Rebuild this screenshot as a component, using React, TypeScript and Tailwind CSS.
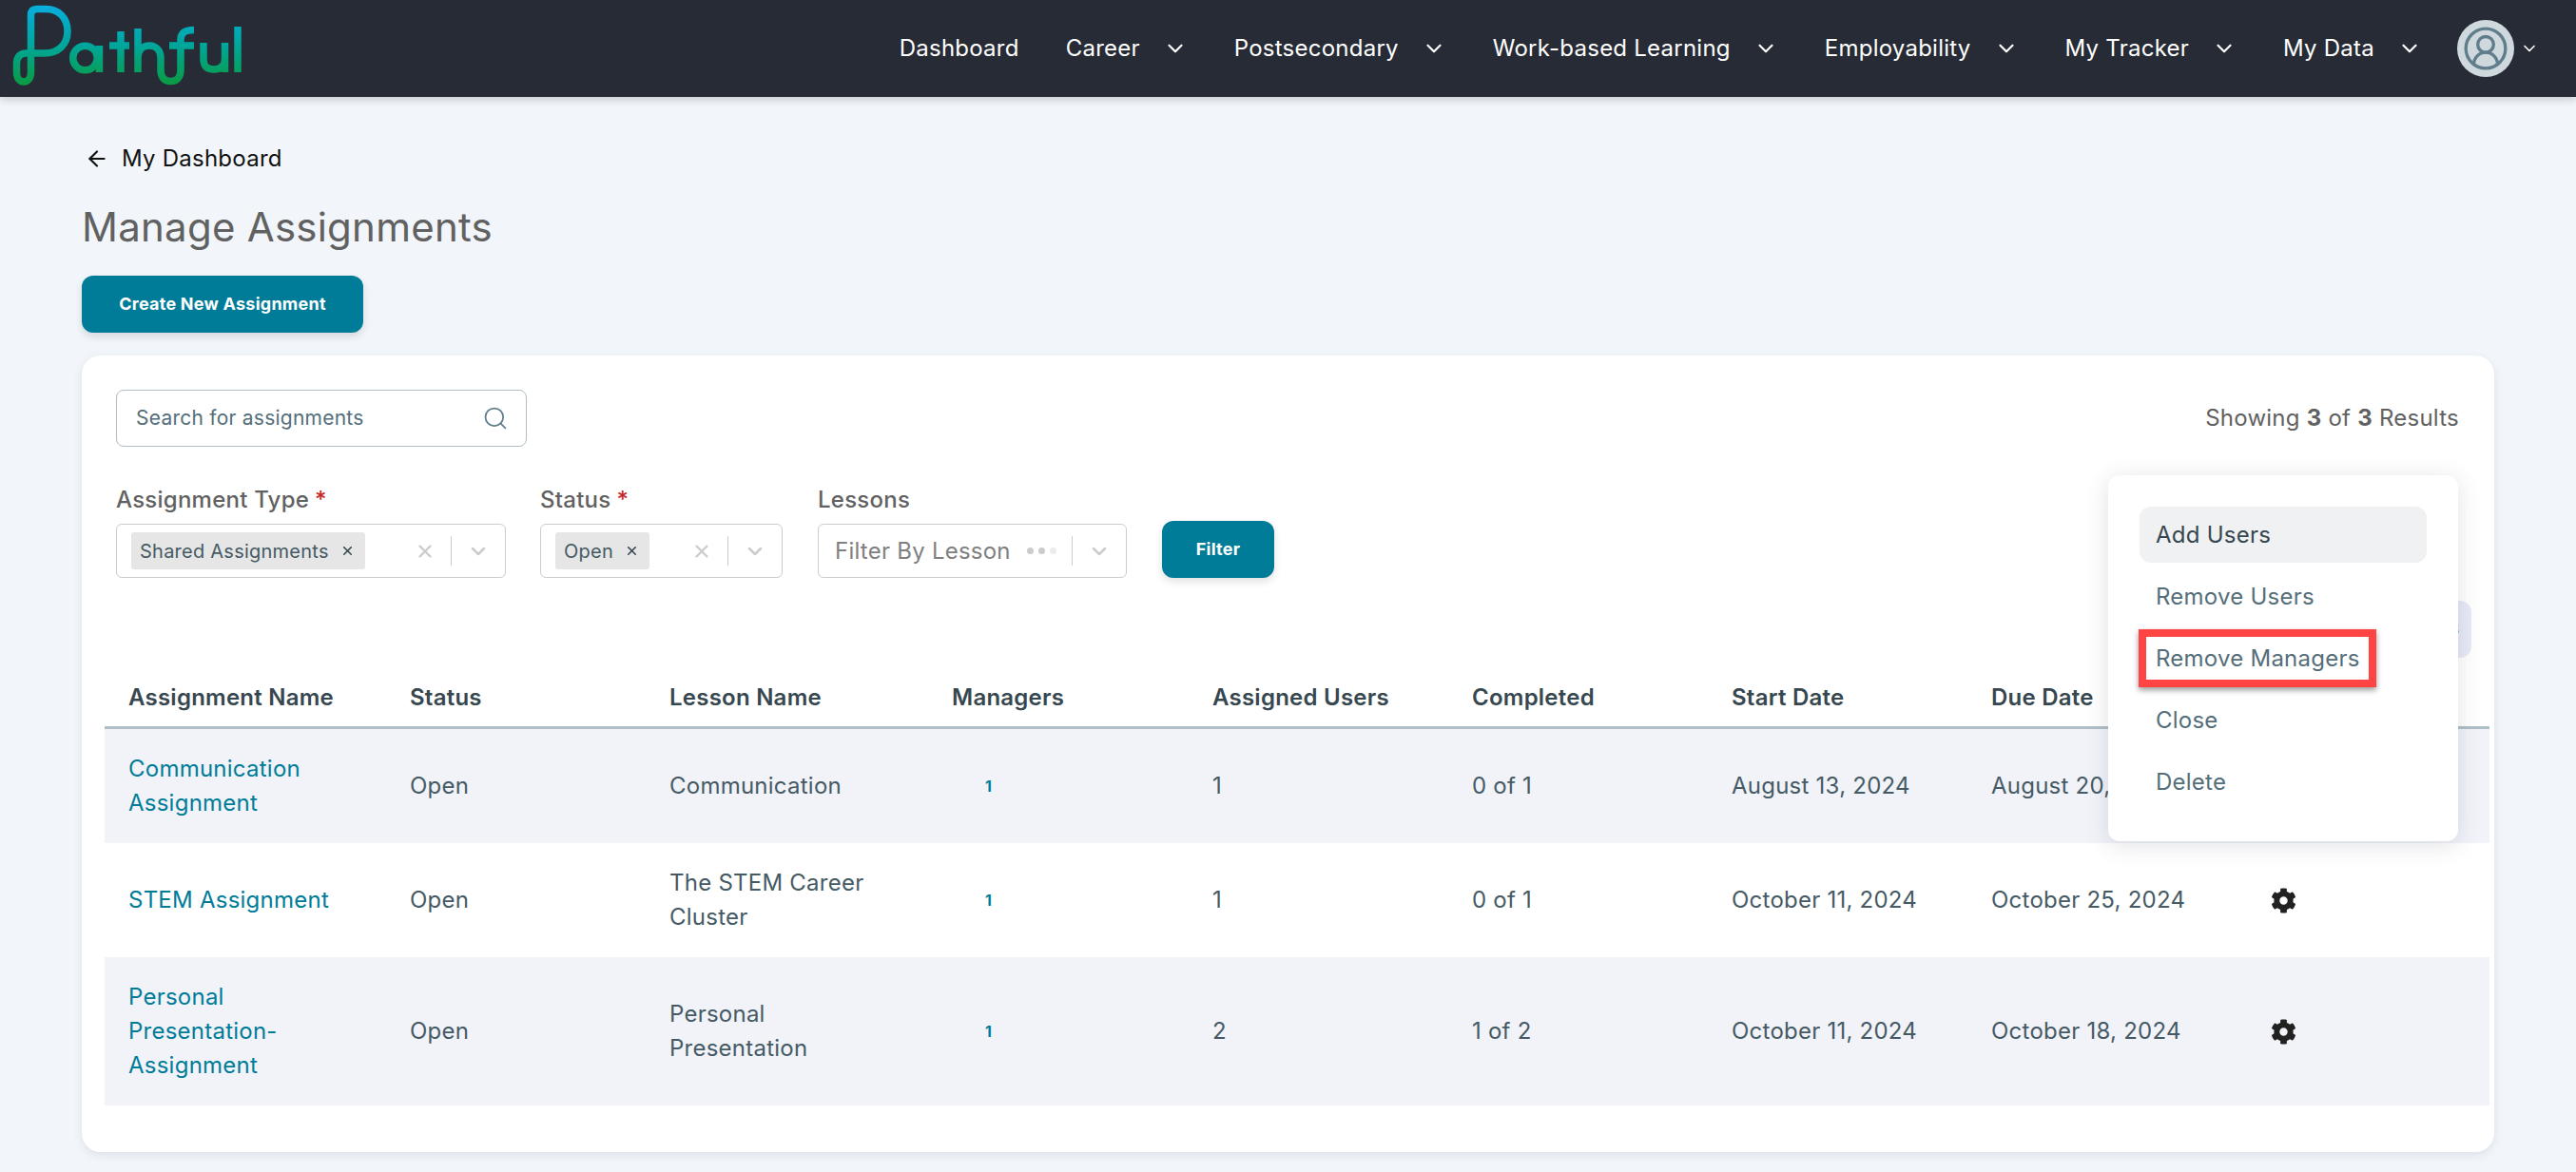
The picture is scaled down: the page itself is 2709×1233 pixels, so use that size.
import { ArrowLeft, ChevronDown, Search, UserCircle2, X } from "lucide-react";
import { FaCog } from "react-icons/fa";

const navItems = [
  { label: "Dashboard", menu: false },
  { label: "Career", menu: true },
  { label: "Postsecondary", menu: true },
  { label: "Work-based Learning", menu: true },
  { label: "Employability", menu: true },
  { label: "My Tracker", menu: true },
  { label: "My Data", menu: true },
];

const rows = [
  { name: "Communication Assignment", lesson: "Communication", assigned: "1", completed: "0 of 1", start: "August 13, 2024", due: "August 20, 2024", shaded: true },
  { name: "STEM Assignment", lesson: "The STEM Career Cluster", assigned: "1", completed: "0 of 1", start: "October 11, 2024", due: "October 25, 2024", shaded: false },
  { name: "Personal Presentation-Assignment", lesson: "Personal Presentation", assigned: "2", completed: "1 of 2", start: "October 11, 2024", due: "October 18, 2024", shaded: true },
];

const columns = [
  { label: "Assignment Name", width: "w-[296px]" },
  { label: "Status", width: "w-[273px]" },
  { label: "Lesson Name", width: "w-[297px]" },
  { label: "Managers", width: "w-[274px]" },
  { label: "Assigned Users", width: "w-[273px]" },
  { label: "Completed", width: "w-[273px]" },
  { label: "Start Date", width: "w-[273px]" },
  { label: "Due Date", width: "w-[273px]" },
  { label: "", width: "w-[276px]" },
];

function Logo() {
  return (
    <svg width="270" height="102" viewBox="0 0 270 102" fill="none" role="img" aria-label="Pathful">
      <defs>
        <linearGradient id="pathful" gradientUnits="userSpaceOnUse" x1="0" y1="6" x2="0" y2="90">
          <stop offset="0" stopColor="#08aede" />
          <stop offset="0.5" stopColor="#00a69a" />
          <stop offset="1" stopColor="#0a9a40" />
        </linearGradient>
      </defs>
      <g stroke="url(#pathful)" strokeWidth="7.5">
        <path d="M32.5 74V16Q32.5 9.5 39 9.5H48C62 9.5 71 19 71 33C71 47 61 56 47 56H28C21 56 17.5 60 17.5 67V76C17.5 82 20.5 86 25 86C29.5 86 32.5 82 32.5 76V70" />
        <circle cx="89.5" cy="61" r="12.8" />
        <path d="M104.5 48V76" />
        <path d="M127 33V76M115 48H136" />
        <path d="M145 30V76M145 61C145 53 150 48 157 48C164 48 169 53 169 61V74C169 81 173 85.5 179.5 85.5C186 85.5 190 81 190 74V42C190 35 194 31.5 204 31.5M178 48H204" />
        <path d="M214 45V62C214 70 218 73 225 73C232 73 236.500 70 236.500 62V45V76" />
        <path d="M250 28V76" />
      </g>
    </svg>
  );
}

function NavBar() {
  return (
    <header className="flex h-[102px] items-center justify-between bg-[#272b35] shadow-[0_3px_8px_rgba(0,0,0,0.18)]">
      <Logo />
      <nav className="flex items-center pr-[39px] text-white">
        {navItems.map((item) => (
          <div key={item.label} className="mr-[49px] flex items-center">
            <span>{item.label}</span>
            {item.menu && <ChevronDown className="ml-[24px] h-[26px] w-[26px]" strokeWidth={2} />}
          </div>
        ))}
        <div className="-ml-[12px] flex h-[60px] w-[60px] items-center justify-center rounded-full bg-[#cfd8dc] text-[#607d8b]">
          <UserCircle2 className="h-[50px] w-[50px]" strokeWidth={1.6} />
        </div>
        <ChevronDown className="ml-[6px] h-[20px] w-[20px]" strokeWidth={2} />
      </nav>
    </header>
  );
}

function SelectBox({ width, tag, placeholder }: { width: string; tag?: string; placeholder?: string }) {
  return (
    <div className={`flex h-[57px] items-center rounded-[6px] border border-[#cccccc] bg-white pl-[15px] ${width}`}>
      {tag && (
        <div className="flex h-[39px] items-center rounded-[3px] bg-[#e6e6e6] pl-[9px] pr-[11px] text-[20px] text-[#455a64]">
          <span>{tag}</span>
          <X className="ml-[12px] h-[15px] w-[15px] text-[#37474f]" strokeWidth={2.5} />
        </div>
      )}
      {placeholder && (
        <span className="-ml-[-2px] whitespace-nowrap text-[#808080]">{placeholder}</span>
      )}
      <div className="ml-auto flex items-center">
        {tag ? (
          <X className="h-[22px] w-[22px] text-[#cccccc]" strokeWidth={2.5} />
        ) : (
          <div className="flex gap-[5px]">
            <span className="h-[7px] w-[7px] rounded-full bg-[#cccccc]" />
            <span className="h-[7px] w-[7px] rounded-full bg-[#cccccc]" />
            <span className="h-[7px] w-[7px] rounded-full bg-[#ebebeb]" />
          </div>
        )}
        <div className="ml-[16px] h-[31px] w-px bg-[#cccccc]" />
        <ChevronDown className="mx-[16px] h-[24px] w-[24px] text-[#cccccc]" strokeWidth={2.5} />
      </div>
    </div>
  );
}

function Field({ label, required, children }: { label: string; required?: boolean; children: React.ReactNode }) {
  return (
    <div className="flex flex-col gap-[7px]">
      <label className="h-[36px] font-medium text-[#616161]">
        {label}
        {required && <span className="ml-[6px] text-[#c62828]">*</span>}
      </label>
      {children}
    </div>
  );
}

function ActionMenu() {
  const items = ["Remove Users", "Remove Managers", "Close", "Delete"];
  return (
    <div className="absolute left-[2131px] top-[126px] flex w-[368px] flex-col gap-[6px] rounded-[12px] bg-white p-[33px] shadow-[0_4px_24px_rgba(60,70,90,0.16)]">
      <div className="flex h-[59px] items-center rounded-[12px] bg-[#f0f1f3] px-[17px] text-[#37474f]">Add Users</div>
      {items.map((item) => (
        <div key={item} className="relative flex h-[59px] items-center px-[17px] text-[#546e7a]">
          {item}
          {item === "Remove Managers" && (
            <div className="absolute -top-px left-[-1px] h-[61px] w-[250px] border-[8px] border-[#ff4444] shadow-[0_3px_6px_rgba(0,0,0,0.4)]" />
          )}
        </div>
      ))}
    </div>
  );
}

export default function App() {
  return (
    <div className="h-[1233px] overflow-hidden bg-[#f2f6fb] font-[Inter,sans-serif] text-[24px] leading-[36px] tracking-[0.01em]">
      <NavBar />
      <main className="px-[86px]">
        <a className="mt-[47px] flex h-[36px] items-center text-[#111111]">
          <ArrowLeft className="ml-[3px] h-[26px] w-[26px]" strokeWidth={2} />
          <span className="ml-[13px]">My Dashboard</span>
        </a>
        <h1 className="mt-[26px] text-[42px] leading-[56px] font-normal text-[#616161]">Manage Assignments</h1>
        <button className="mt-[23px] flex h-[60px] w-[296px] items-center justify-center rounded-[12px] bg-[#007c98] text-[18px] font-bold text-white shadow-[0_4px_8px_rgba(0,0,0,0.12)]">
          Create New Assignment
        </button>

        <section className="relative mt-[24px] h-[838px] rounded-[20px] bg-white px-[24px] pt-[36px] shadow-[0_3px_10px_rgba(60,70,90,0.12)]">
          <div className="flex items-center justify-between px-[12px]">
            <div className="flex h-[60px] w-[432px] items-center justify-between rounded-[8px] border border-[#b0bec5] pl-[20px] pr-[18px] text-[21px] text-[#546e7a]">
              <span>Search for assignments</span>
              <Search className="h-[28px] w-[28px] text-[#607d8b]" strokeWidth={1.5} />
            </div>
            <p className="pr-[1px] text-[#616161]">
              Showing <b>3</b> of <b>3</b> Results
            </p>
          </div>

          <div className="mt-[38px] flex items-end px-[12px]">
            <Field label="Assignment Type" required>
              <SelectBox width="w-[410px]" tag="Shared Assignments" />
            </Field>
            <div className="ml-[36px]">
              <Field label="Status" required>
                <SelectBox width="w-[255px]" tag="Open" />
              </Field>
            </div>
            <div className="ml-[37px]">
              <Field label="Lessons">
                <SelectBox width="w-[325px]" placeholder="Filter By Lesson" />
              </Field>
            </div>
            <button className="ml-[37px] h-[60px] w-[118px] rounded-[12px] bg-[#007c98] text-[18px] font-bold text-white shadow-[0_4px_8px_rgba(0,0,0,0.12)]">
              Filter
            </button>
          </div>

          <div className="mt-[24px] flex justify-end">
            <button className="h-[60px] rounded-[12px] bg-[#e8eaf6] px-[13px] text-[17px] font-bold text-[#212121]">
              BULK ACTIONS
            </button>
          </div>

          <table className="w-[2508px] table-fixed border-collapse">
            <thead>
              <tr className="border-b-[3px] border-[#aebfc7]">
                {columns.map((col) => (
                  <th key={col.label} className={`${col.width} pb-[12px] pl-[25px] pt-[24px] text-left font-semibold text-[#37474f]`}>
                    {col.label}
                  </th>
                ))}
              </tr>
            </thead>
            <tbody className="text-[#455a64]">
              {rows.map((row) => (
                <tr key={row.name} className={row.shaded ? "bg-[#f1f3f9]" : "bg-white"}>
                  <td className="py-[24px] pl-[25px] pr-[25px] text-[#007c98]">{row.name}</td>
                  <td className="pl-[25px]">Open</td>
                  <td className="py-[24px] pl-[25px] pr-[45px]">{row.lesson}</td>
                  <td className="pl-[60px] text-[16px] font-bold text-[#007c98]">1</td>
                  <td className="pl-[25px]">{row.assigned}</td>
                  <td className="pl-[25px]">{row.completed}</td>
                  <td className="whitespace-nowrap pl-[25px]">{row.start}</td>
                  <td className="whitespace-nowrap pl-[25px]">{row.due}</td>
                  <td className="pl-[46px]">
                    <FaCog className="h-[27px] w-[27px] text-[#212121]" />
                  </td>
                </tr>
              ))}
            </tbody>
          </table>

          <ActionMenu />
        </section>
      </main>
    </div>
  );
}
